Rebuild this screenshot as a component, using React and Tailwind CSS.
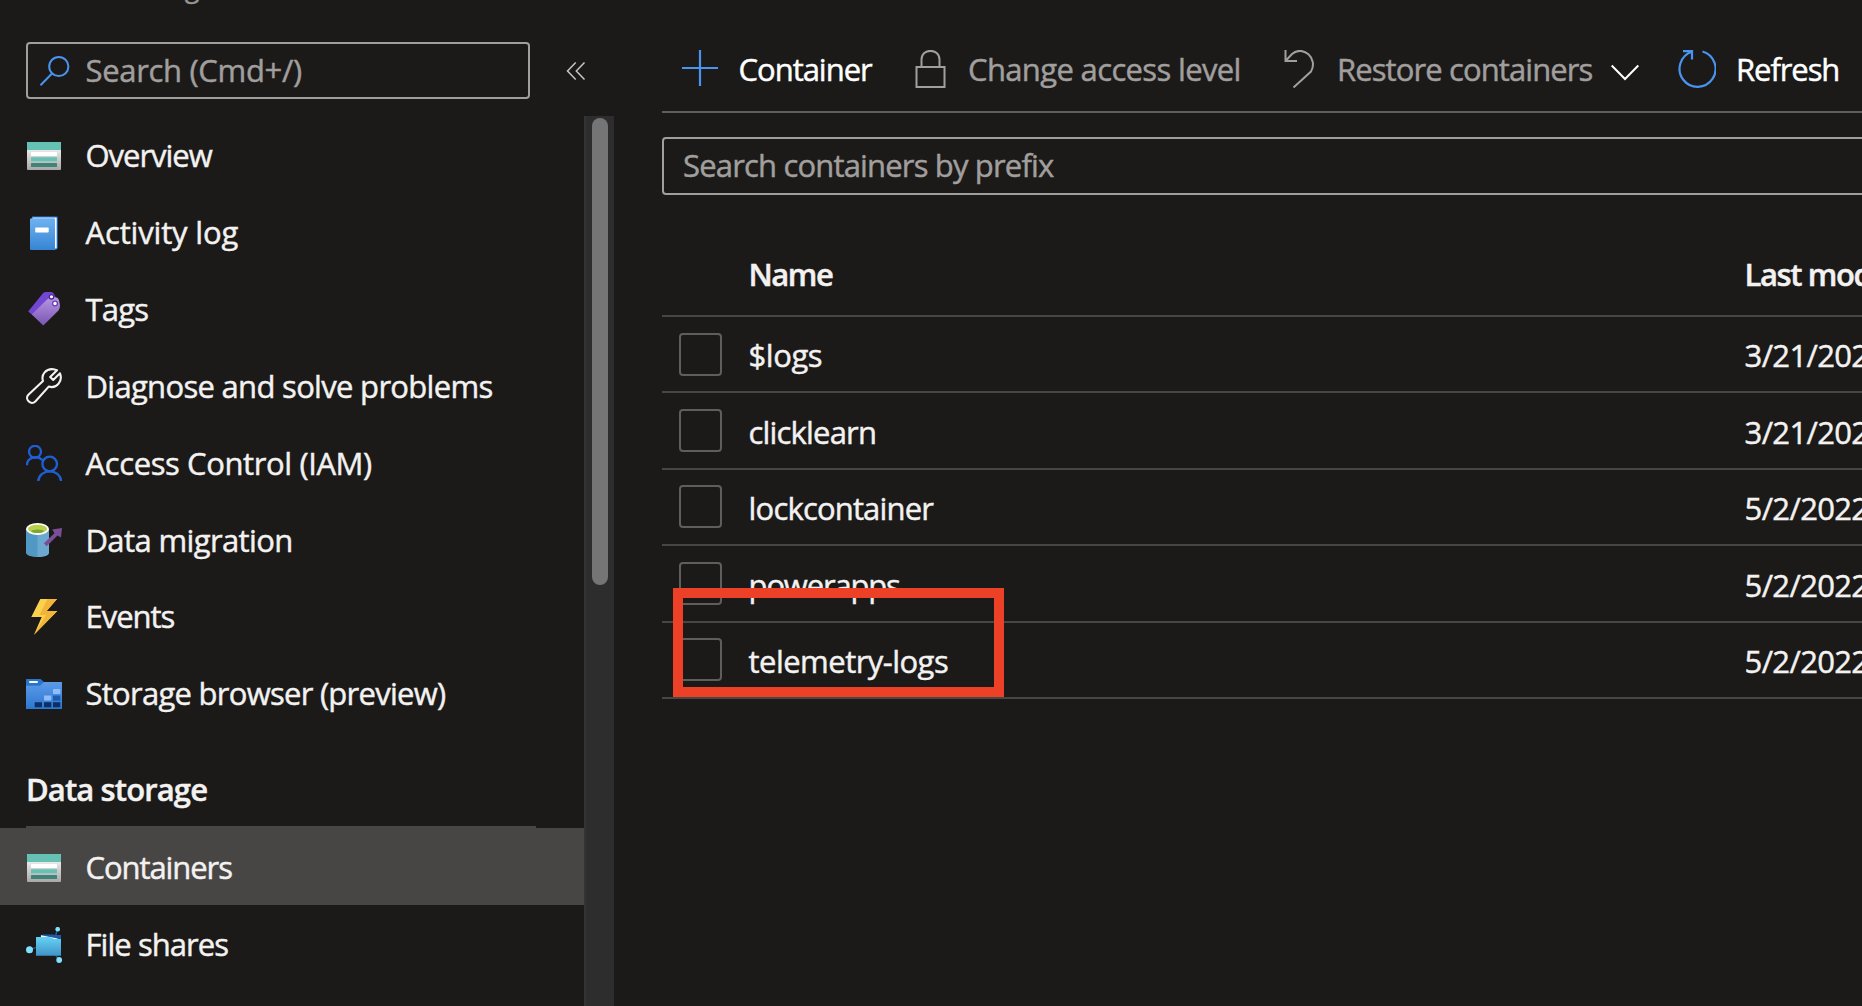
import React from "react";

const Icon = ({ children, className = "w-9 h-9" }) => (
  <svg viewBox="0 0 36 36" fill="none" className={`shrink-0 ${className}`}>
    {children}
  </svg>
);

const ContainerIcon = () => (
  <Icon>
    <defs>
      <linearGradient id="sheet" x1="0" y1="0" x2="0" y2="1">
        <stop offset="0.2" stopColor="#f0f0f0" />
        <stop offset="1" stopColor="#a8a8a8" />
      </linearGradient>
    </defs>
    <rect x="1" y="4" width="34" height="28" rx="1" fill="url(#sheet)" />
    <path d="M1 12V5a1 1 0 0 1 1-1h32a1 1 0 0 1 1 1v7z" fill="#66c1b5" />
    <rect x="5" y="14" width="26" height="4" rx="0.5" fill="#fff" />
    <rect x="5" y="19.2" width="26" height="4" rx="0.5" fill="#66c1b5" />
    <rect x="5" y="25" width="26" height="4" rx="0.5" fill="#3f8379" />
  </Icon>
);

const BookIcon = () => (
  <Icon>
    <defs>
      <linearGradient id="book" x1="0" y1="0" x2="0" y2="1">
        <stop stopColor="#6fb2f2" />
        <stop offset="1" stopColor="#3785d3" />
      </linearGradient>
    </defs>
    <path d="M6 1.3h24.500a1.500 1.500 0 0 1 1.500 1.500V33l-2 2H6z" fill="#1c61ad" />
    <path d="M6.500 2.400h24.200v31H7z" fill="#fff" />
    <path d="M4 4.500A1.500 1.500 0 0 1 5.500 3.200H28a1 1 0 0 1 1 1V35H5a1 1 0 0 1-1-1z" fill="url(#book)" />
    <rect x="9.200" y="12.500" width="13.500" height="5" rx="0.800" fill="#fff" />
  </Icon>
);

const TagsIcon = () => (
  <Icon>
    <defs>
      <linearGradient id="tag" x1="0" y1="0" x2="0" y2="1">
        <stop stopColor="#b796e0" />
        <stop offset="1" stopColor="#7a55b5" />
      </linearGradient>
    </defs>
    <path d="M2.200 20.500 L17 2.200 Q18.200 1 20 1 L25 1 Q27 1 28 3 L30 7 L7 24.500z" fill="#7347d4" />
    <path d="M5.800 23.500 L20.500 9 Q22 7.300 24 7 L29.500 6.300 Q32 6.500 33 9 L34 14.500 Q34 17.500 32.500 19.500 L17.300 34.500z" fill="url(#tag)" />
    <circle cx="25.500" cy="5.800" r="2.200" fill="#fff" stroke="#4c2a96" strokeWidth="1.300" />
    <circle cx="29" cy="12.500" r="2.400" fill="#fff" stroke="#6a3fb5" strokeWidth="1.300" />
  </Icon>
);

const WrenchIcon = () => (
  <Icon>
    <path
      d="M17 13 C14.800 6.500 20 0.300 27.500 1.200 L31 2.200 L24.200 9 L27.200 12 L34 5.300 C37 12.500 31 21 22.700 18.600 L9.300 33.500 C4.800 37.800 -1.800 31 2.400 26.700Z"
      stroke="#f3f2f1" strokeWidth="2.100" strokeLinejoin="round"
    />
  </Icon>
);

const PeopleIcon = () => (
  <Icon>
    <g stroke="#1f5fd6" strokeWidth="2.300">
      <circle cx="9" cy="6.800" r="6" />
      <path d="M0.900 20.200C1.200 12 11 9.800 16.500 15.200" />
      <circle cx="23.700" cy="19" r="7.300" />
      <path d="M12.300 36C13 23.200 34.400 23.200 35.100 36" />
    </g>
  </Icon>
);

const MigrationIcon = () => (
  <Icon>
    <path d="M0 7V30.500C0 36.500 23 36.500 23 30.500V7z" fill="#5298c4" />
    <path d="M11.500 7V35C18 35 23 33.500 23 30.500V7z" fill="#6ca9d0" />
    <ellipse cx="11.500" cy="7" rx="11.500" ry="6" fill="#fff" />
    <ellipse cx="11.500" cy="6.900" rx="9.600" ry="4.200" fill="#b9d04b" />
    <ellipse cx="11.500" cy="9.200" rx="6.200" ry="1.700" fill="#7ba832" />
    <path d="M17.800 21.200 L28.500 11.200 L26.200 7.500 L36 6 L35 15.500 L31.500 13.500 L20.700 24.200z" fill="#7a4f98" />
  </Icon>
);

const BoltIcon = () => (
  <Icon>
    <path d="M14.300 0H31L20.700 12H31.300L8 35.700L15.700 18H5.300z" fill="#fbd24e" />
    <path d="M21.500 0H31L20.700 12H31.300L8 35.700L20 16H13.500z" fill="#f3b43a" />
  </Icon>
);

const BrowserIcon = () => (
  <Icon>
    <defs>
      <linearGradient id="folder" x1="0" y1="0" x2="0" y2="1">
        <stop stopColor="#5d9ae8" />
        <stop offset="1" stopColor="#2c78d0" />
      </linearGradient>
    </defs>
    <path d="M0 3.500Q0 3 0.500 3H14.500L18 6H35.500Q36 6 36 6.500V32H0z" fill="#2a74cc" />
    <path d="M0 9.700H14L18 6H35.500Q36 6 36 6.500V32.500Q36 33 35.500 33H0.500Q0 33 0 32.500z" fill="url(#folder)" />
    <rect x="3" y="5" width="9" height="2" rx="1" fill="#fff" />
    <path d="M27 13h7.300v5H27zM18 19.600h7.300v5H18z" fill="#8fbcfa" />
    <path d="M27 19.600h7.300v5H27z" fill="#1c5cab" />
    <path d="M8.700 26.200H16v5H8.700zM18 26.200h7.300v5H18zM27 26.200h7.300v5H27z" fill="#0b2f66" />
  </Icon>
);

const FileShareIcon = () => (
  <Icon>
    <defs>
      <linearGradient id="share" x1="0" y1="0" x2="0" y2="1">
        <stop stopColor="#65d3f5" />
        <stop offset="1" stopColor="#3f93c6" />
      </linearGradient>
    </defs>
    <path d="M31.500 2L29.500 9M3.500 22.700L10 20.500M33 33L29.500 28" stroke="#1f62b5" strokeWidth="1.300" />
    <path d="M14.500 8.500L17 7.500H27L29 8H35V27H14.500z" fill="#1d5aa8" />
    <path d="M15 8.300L31.500 11.500V14H15z" fill="#fff" />
    <path d="M10 10.500Q10 10 10.500 10H23.500L28.500 12H34.500Q35 12 35 12.500V28.300Q35 28.800 34.500 28.800H10.500Q10 28.800 10 28.300z" fill="url(#share)" />
    <circle cx="3.500" cy="22.700" r="3.500" fill="#7fe3ff" />
    <circle cx="31.700" cy="2.200" r="2.300" fill="#7fe3ff" />
    <circle cx="33.200" cy="33" r="2.900" fill="#7fe3ff" />
  </Icon>
);

const menu = [
  ["Overview", ContainerIcon, "tracking-[-1.03px]"],
  ["Activity log", BookIcon, "tracking-[-0.16px]"],
  ["Tags", TagsIcon, "tracking-[-0.8px]"],
  ["Diagnose and solve problems", WrenchIcon, "tracking-[-0.69px]"],
  ["Access Control (IAM)", PeopleIcon, "tracking-[-0.39px]"],
  ["Data migration", MigrationIcon, "tracking-[-0.62px]"],
  ["Events", BoltIcon, "tracking-[-1.04px]"],
  ["Storage browser (preview)", BrowserIcon, "tracking-[-0.73px]"],
];

const storage = [
  ["Containers", ContainerIcon, "tracking-[-1.08px]", "bg-[#484644]"],
  ["File shares", FileShareIcon, "tracking-[-0.94px]", ""],
];

const rows = [
  ["$logs", "3/21/2022", "tracking-[-0.46px]"],
  ["clicklearn", "3/21/2022", "tracking-[-0.83px]"],
  ["lockcontainer", "5/2/2022", "tracking-[-0.83px]"],
  ["powerapps", "5/2/2022", "tracking-[-1.18px]"],
  ["telemetry-logs", "5/2/2022", "tracking-[-0.54px]"],
];

function MenuItem({ label, Glyph, tracking, className = "" }) {
  return (
    <li className={`flex h-[76.85px] shrink-0 items-center gap-[23.5px] pl-[26px] pt-[2.6px] ${className}`}>
      <Glyph />
      <span className={`pb-[0.8px] whitespace-nowrap ${tracking}`}>{label}</span>
    </li>
  );
}

function Sidebar() {
  return (
    <aside className="flex h-full w-[614px] shrink-0 flex-col">
      <div className="h-[42px] shrink-0 overflow-hidden pl-[118px] text-[27px] leading-[30px] text-[#979593]">
        <p className="-mt-7">Storage account</p>
      </div>
      <div className="flex h-[74px] shrink-0 items-start pl-[26px]">
        <label className="flex h-[57px] w-[504px] items-center gap-[12.5px] rounded-[4px] border-2 border-[#a19f9d] pl-[11px] text-[#a19f9d]">
          <svg viewBox="0 0 34 34" fill="none" stroke="#4894f0" strokeWidth="2" className="h-[34px] w-[34px]">
            <circle cx="19.800" cy="12.500" r="9.600" />
            <path d="M13 19.500L1.500 31.200" />
          </svg>
          <span className="pb-[2px] tracking-[-0.32px]">Search (Cmd+/)</span>
        </label>
        <svg viewBox="0 0 20 20" fill="none" stroke="#c8c6c4" strokeWidth="1.500" className="mt-[19px] ml-[36px] h-5 w-5">
          <path d="M9.700 1.500L1.500 10L9.700 18.500M18.500 1.500L10.300 10L18.500 18.500" />
        </svg>
      </div>
      <div className="flex min-h-0 grow">
        <nav className="flex w-[584px] flex-col overflow-hidden">
          <ul>
            {menu.map(([label, Glyph, tracking]) => (
              <MenuItem key={label} label={label} Glyph={Glyph} tracking={tracking} />
            ))}
          </ul>
          <h2 className="ml-[26px] flex h-[97.2px] w-[510px] shrink-0 items-center border-b-2 border-[#484644] pt-[22px] font-semibold tracking-[-0.88px]">
            Data storage
          </h2>
          <ul>
            {storage.map(([label, Glyph, tracking, bg]) => (
              <MenuItem key={label} label={label} Glyph={Glyph} tracking={tracking} className={bg} />
            ))}
          </ul>
        </nav>
        <div className="w-[30px] border-l-2 border-[#333333] bg-[#2d2d2d] pt-[2px] pl-[6px]">
          <div className="h-[467px] w-4 rounded-full bg-[#757575]" />
        </div>
      </div>
    </aside>
  );
}

function Toolbar() {
  const glyph = "h-[38px] w-[38px] shrink-0";
  return (
    <div className="flex h-[113px] shrink-0 items-center border-b-2 border-[#605e5c] pt-[26px] pl-[19px] whitespace-nowrap">
      <div className="flex w-[230px] shrink-0 items-center gap-[19.5px]">
        <svg viewBox="0 0 38 38" className={glyph} fill="none" stroke="#4894f0" strokeWidth="2.200">
          <path d="M19 0v36M1 18h36" />
        </svg>
        <span className="tracking-[-1.02px] text-white">Container</span>
      </div>
      <div className="flex w-[369px] shrink-0 items-center gap-[19px] text-[#a19f9d]">
        <svg viewBox="0 0 38 38" className={glyph} fill="none" stroke="currentColor" strokeWidth="2">
          <path d="M5.500 17H33.500V37H5.500zM10.500 17V9.500C10.500 -2 28.500 -2 28.500 9.500V17" />
        </svg>
        <span className="tracking-[-0.64px]">Change access level</span>
      </div>
      <div className="flex w-[398px] shrink-0 items-center gap-[19px] text-[#a19f9d]">
        <svg viewBox="0 0 38 38" className={glyph} fill="none" stroke="currentColor" strokeWidth="2">
          <path d="M5.500 0V11H17M5.500 11L12 4C23 -5.500 38.500 8.500 31 21.500L13.500 37.500" />
        </svg>
        <span className="tracking-[-0.9px]">Restore containers</span>
        <svg viewBox="0 0 28 18" className="mt-2 h-[18px] w-7 shrink-0" fill="none" stroke="#fff" strokeWidth="2">
          <path d="M0.700 1.500L14 15L27.300 1.500" />
        </svg>
      </div>
      <div className="flex shrink-0 items-center gap-[20px]">
        <svg viewBox="0 0 38 38" className={glyph} fill="none" stroke="#4894f0" strokeWidth="2.200">
          <path d="M24.500 1.500A18 18 0 1 1 13.700 1.800M5 1.100H14V9.500" />
        </svg>
        <span className="tracking-[-1.08px] text-white">Refresh</span>
      </div>
    </div>
  );
}

function ContainerTable() {
  return (
    <section className="flex flex-col">
      <div className="mt-[38px] flex h-[84px] items-center border-b-2 border-[#484644] font-semibold whitespace-nowrap">
        <span className="ml-[86.5px] w-[996px] shrink-0 tracking-[-1.45px]">Name</span>
        <span className="tracking-[-1.4px]">Last modified</span>
      </div>
      {rows.map(([name, date, tracking]) => (
        <div key={name} className="flex h-[76.4px] items-center border-b-2 border-[#484644] pl-[17px]">
          <span className="h-[43px] w-[43px] shrink-0 rounded-[4px] border-2 border-[#605e5c]" />
          <span className={`ml-[26.6px] w-[996px] shrink-0 pt-[2.4px] ${tracking}`}>{name}</span>
          <span className="pt-[2.4px] tracking-[-0.66px]">{date}</span>
        </div>
      ))}
    </section>
  );
}

export default function App() {
  return (
    <div className="relative flex h-[1006px] w-[1862px] overflow-hidden bg-[#1b1a19] font-['Open_Sans',sans-serif] text-[31px] leading-[42px] text-[#f3f2f1] [-webkit-text-stroke:0.45px]">
      <Sidebar />
      <main className="ml-12 flex w-[1200px] shrink-0 flex-col overflow-hidden">
        <Toolbar />
        <div className="mt-6 flex h-[58px] w-[1240px] shrink-0 items-center rounded-[4px] border-2 border-[#a19f9d] pb-[1.6px] pl-[19px] tracking-[-0.83px] text-[#a19f9d]">
          Search containers by prefix
        </div>
        <ContainerTable />
      </main>
      <div className="absolute top-[588px] left-[673px] h-[109px] w-[331px] border-[10px] border-[#ed4127]" />
    </div>
  );
}
